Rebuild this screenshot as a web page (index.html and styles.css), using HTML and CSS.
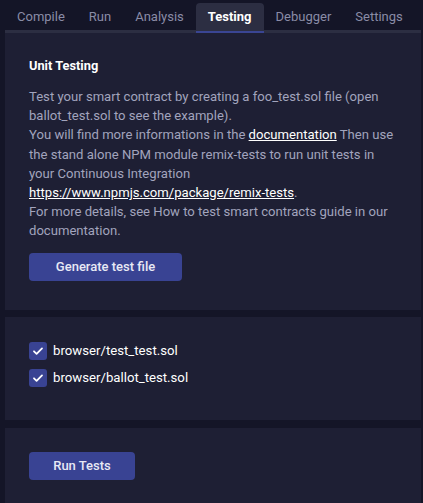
FILE: index.html
```html
<!DOCTYPE html>
<html>
<head>
<meta charset="utf-8">
<link rel="stylesheet" href="styles.css">
</head>
<body>
<div class="app">
  <nav class="tabs">
    <span class="tab">Compile</span>
    <span class="tab">Run</span>
    <span class="tab">Analysis</span>
    <span class="tab active">Testing</span>
    <span class="tab">Debugger</span>
    <span class="tab">Settings</span>
  </nav>
  <section class="panel panel-intro">
    <h6 class="title">Unit Testing</h6>
    <p class="desc">Test your smart contract by creating a foo_test.sol file (open ballot_test.sol to see the example).<br>You will find more informations in the <a href="#">documentation</a> Then use the stand alone NPM module remix-tests to run unit tests in your Continuous Integration <a href="#">https://www.npmjs.com/package/remix-tests</a>.<br>For more details, see How to test smart contracts guide in our documentation.</p>
    <button class="btn">Generate test file</button>
  </section>
  <section class="panel panel-files">
    <label class="check-row"><span class="check"><svg viewBox="0 0 18 18" width="18" height="18"><path d="M5 9.3l2.6 2.5L13 6.4" fill="none" stroke="#fff" stroke-width="1.8" stroke-linecap="round" stroke-linejoin="round"/></svg></span>browser/test_test.sol</label>
    <label class="check-row"><span class="check"><svg viewBox="0 0 18 18" width="18" height="18"><path d="M5 9.3l2.6 2.5L13 6.4" fill="none" stroke="#fff" stroke-width="1.8" stroke-linecap="round" stroke-linejoin="round"/></svg></span>browser/ballot_test.sol</label>
  </section>
  <section class="panel panel-run">
    <button class="btn btn-run">Run Tests</button>
  </section>
</div>
</body>
</html>
```
FILE: styles.css
```css
html, body {
  margin: 0;
  padding: 0;
  background: #141527;
  font-family: Roboto, "Liberation Sans", Arial, sans-serif;
  color: #a2a4bd;
}
.app {
  padding: 0 2px 0 5px;
}
.tabs {
  display: flex;
  height: 30px;
  align-items: flex-end;
  border-bottom: 3px solid #2c2e42;
}
.tab {
  display: flex;
  align-items: center;
  justify-content: center;
  height: 27px;
  padding: 0 12px;
  font-size: 13px;
  color: #8a8ca6;
  box-sizing: border-box;
}
.active {
  background: #2c2e42;
  color: #ffffff;
  font-weight: 700;
  border-radius: 4px 4px 0 0;
  box-shadow: inset 0 -2px 0 #3a4593;
  margin-bottom: -3px;
  height: 30px;
  padding-bottom: 3px;
}
.panel {
  background: #1e1f34;
  padding: 0 24px;
}
.panel-intro {
  padding-top: 23px;
  padding-bottom: 29px;
  margin-bottom: 7px;
}
.title {
  margin: 0;
  font-size: 12.8px;
  line-height: 20px;
  font-weight: 700;
  color: #ffffff;
}
.desc {
  margin: 11px 0 12px;
  font-size: 13.1px;
  line-height: 19.2px;
}
.desc a {
  color: #ffffff;
  text-decoration: underline;
}
.btn {
  display: block;
  height: 28px;
  width: 153px;
  padding: 0;
  border: none;
  border-radius: 4px;
  background: #394393;
  color: #e8e9f5;
  font-family: inherit;
  font-size: 13px;
  font-weight: 500;
}
.panel-files {
  padding-top: 25px;
  padding-bottom: 33px;
  margin-bottom: 8px;
  display: flex;
  flex-direction: column;
  gap: 9px;
}
.check-row {
  display: flex;
  align-items: center;
  gap: 6px;
  font-size: 13.2px;
  color: #ffffff;
  height: 18px;
}
.check {
  width: 18px;
  height: 18px;
  border-radius: 3px;
  background: #394393;
  display: flex;
}
.panel-run {
  padding-top: 24px;
  padding-bottom: 24px;
}
.btn-run {
  width: 106px;
}
```
